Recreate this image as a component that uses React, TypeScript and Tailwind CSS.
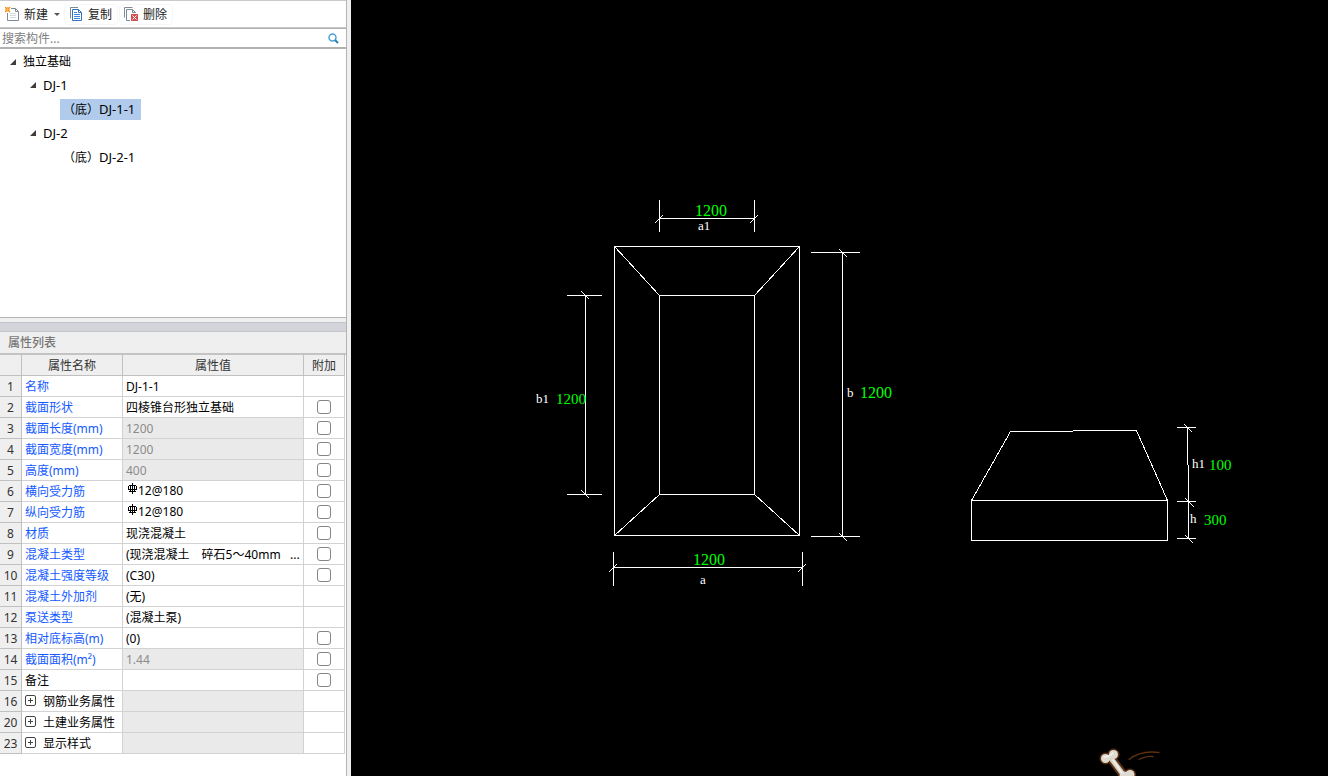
import { useState } from "react";

type Row = {
  no: number;
  name: string;
  value?: string;
  kind?: "plain" | "readonly" | "rebar" | "group";
  check?: boolean;
  black?: boolean;
};

const rows: Row[] = [
  { no: 1, name: "名称", value: "DJ-1-1" },
  { no: 2, name: "截面形状", value: "四棱锥台形独立基础", check: true },
  { no: 3, name: "截面长度(mm)", value: "1200", kind: "readonly", check: true },
  { no: 4, name: "截面宽度(mm)", value: "1200", kind: "readonly", check: true },
  { no: 5, name: "高度(mm)", value: "400", kind: "readonly", check: true },
  { no: 6, name: "横向受力筋", value: "12@180", kind: "rebar", check: true },
  { no: 7, name: "纵向受力筋", value: "12@180", kind: "rebar", check: true },
  { no: 8, name: "材质", value: "现浇混凝土", check: true },
  { no: 9, name: "混凝土类型", value: "(现浇混凝土　碎石5～40mm   ...", check: true },
  { no: 10, name: "混凝土强度等级", value: "(C30)", check: true },
  { no: 11, name: "混凝土外加剂", value: "(无)" },
  { no: 12, name: "泵送类型", value: "(混凝土泵)" },
  { no: 13, name: "相对底标高(m)", value: "(0)", check: true },
  { no: 14, name: "截面面积(m²)", value: "1.44", kind: "readonly", check: true },
  { no: 15, name: "备注", check: true, black: true },
  { no: 16, name: "钢筋业务属性", kind: "group" },
  { no: 20, name: "土建业务属性", kind: "group" },
  { no: 23, name: "显示样式", kind: "group" },
];

const NewIcon = () => (
  <svg width="15" height="16" viewBox="0 0 15 16" fill="none">
    <path d="M6 1.500H10.500L13.500 4.500V13.500H2.500V6" stroke="#7d8b99" />
    <path d="M10.500 1.500V4.500H13.500" stroke="#7d8b99" />
    <path d="M5 6.500H11M5 8.500H11M5 10.500H11" stroke="#d3dae0" />
    <path d="M0 0L5 5M5 0L0 5" stroke="#f08c14" strokeWidth="1.500" />
    <path d="M2.500 0V5M0 2.500H5" stroke="#fbb955" />
  </svg>
);

const CopyIcon = () => (
  <svg width="13" height="15" viewBox="0 0 13 15" fill="none">
    <path d="M0.500 11.500V0.500H8" stroke="#7d8b99" />
    <path d="M2.500 2.500H8.500L11.500 5.500V13.500H2.500Z" fill="#fff" stroke="#2f74c4" />
    <path d="M8.500 2.500V5.500H11.500" stroke="#2f74c4" />
    <path d="M4 5.500H7M4 7.500H10M4 9.500H10M4 11.500H10" stroke="#3f86d6" />
  </svg>
);

const DeleteIcon = () => (
  <svg width="15" height="15" viewBox="0 0 15 15" fill="none">
    <path d="M0.500 10.500V0.500H8.500" stroke="#7d8b99" />
    <path d="M6 13.500H2.500V2.500H8.500L11.500 5.500V6" stroke="#7d8b99" />
    <path d="M8.500 2.500V5.500H11.500" stroke="#7d8b99" />
    <rect x="7" y="7" width="7" height="7" fill="#d64f50" />
    <path d="M8.500 8.500L12.500 12.500M12.500 8.500L8.500 12.500" stroke="#fff" />
  </svg>
);

const SearchIcon = () => (
  <svg width="11" height="11" viewBox="0 0 11 11" fill="none">
    <circle cx="4.500" cy="4.500" r="3.500" stroke="#4ba3d3" strokeWidth="1.500" />
    <path d="M7 7L10 10" stroke="#2d7fb0" strokeWidth="2" />
  </svg>
);

const RebarIcon = () => (
  <svg width="9" height="12" viewBox="0 0 9 12" fill="none" stroke="#000" shapeRendering="crispEdges">
    <path d="M1 3.500H8M0 7.500H9M1 9.500H8M4.500 1V12M2.500 3V9M6.500 3V9M0.500 4V7M8.500 4V7" />
  </svg>
);

const Expander = ({ label, onClick }: { label: string; onClick: () => void }) => (
  <button type="button" aria-label={label} onClick={onClick} className="w-3 h-6 flex items-center">
    <svg width="6" height="6" viewBox="0 0 6 6">
      <path d="M6 0V6H0Z" fill="#3c3c3c" />
    </svg>
  </button>
);

const TreePanel = () => {
  const [selected, setSelected] = useState("DJ-1-1");
  const [closed, setClosed] = useState<string[]>([]);
  const toggle = (id: string) =>
    setClosed((c) => (c.includes(id) ? c.filter((x) => x !== id) : [...c, id]));

  return (
    <ul className="h-[269px] border-b border-[#b4b4b4] bg-white text-black">
      <li>
        <div className="flex items-center h-6 pl-[10px] pt-[2px] gap-px">
          <Expander label="独立基础" onClick={() => toggle("root")} />
          <span>独立基础</span>
        </div>
        {!closed.includes("root") && (
          <ul>
            {["DJ-1", "DJ-2"].map((id) => (
              <li key={id}>
                <div className="flex items-center h-6 pl-[30px] gap-px">
                  <Expander label={id} onClick={() => toggle(id)} />
                  <span className="text-[13px]">{id}</span>
                </div>
                {!closed.includes(id) && (
                  <div className="flex items-center h-6 pl-[60px]">
                    <button
                      type="button"
                      onClick={() => setSelected(`${id}-1`)}
                      className={`h-[21px] w-[81px] pl-[3px] pt-px flex items-baseline whitespace-nowrap ${selected === `${id}-1` ? "bg-[#b0cbec]" : ""}`}
                    >
                      （底）<span className="text-[13px]">{id}-1</span>
                    </button>
                  </div>
                )}
              </li>
            ))}
          </ul>
        )}
      </li>
    </ul>
  );
};

const PropertyTable = () => (
  <table className="w-[345px] table-fixed border-separate border-spacing-0 text-left">
    <colgroup>
      <col className="w-[22px]" />
      <col className="w-[101px]" />
      <col className="w-[181px]" />
      <col className="w-[41px]" />
    </colgroup>
    <thead>
      <tr className="h-[21px] bg-[#efefef] text-[#333]">
        <td className="border-r border-b border-[#c0c0c0]" />
        <th scope="col" className="border-r border-b border-[#c0c0c0] pt-[2px] font-normal text-center">属性名称</th>
        <th scope="col" className="border-r border-b border-[#c0c0c0] pt-[2px] font-normal text-center">属性值</th>
        <th scope="col" className="border-r border-b border-[#c0c0c0] pt-[2px] font-normal text-center">附加</th>
      </tr>
    </thead>
    <tbody>
      {rows.map((row) => (
        <tr key={row.no} className="h-[21px]">
          <td className="border-r border-b border-[#c0c0c0] bg-[#efefef] pt-[2px] text-center text-[#333]">{row.no}</td>
          <th
            scope="row"
            className={`border-r border-b border-[#d2d2d2] pt-[2px] pl-[3px] font-normal whitespace-nowrap ${row.kind === "group" || row.black ? "text-black" : "text-[#145aff]"}`}
          >
            {row.kind === "group" ? (
              <span className="flex items-start gap-[7px]">
                <button type="button" aria-label={`展开${row.name}`} className="w-[11px] h-[11px] mt-[2px]">
                  <svg width="11" height="11" viewBox="0 0 11 11" fill="none" stroke="#444">
                    <rect x="0.500" y="0.500" width="10" height="10" rx="1.500" />
                    <path d="M3 5.500H8M5.500 3V8" />
                  </svg>
                </button>
                {row.name}
              </span>
            ) : (
              row.name
            )}
          </th>
          <td
            className={`border-r border-b border-[#d2d2d2] pl-[3px] whitespace-pre overflow-hidden ${row.kind === "rebar" ? "" : "pt-[2px]"} ${row.kind === "readonly" || row.kind === "group" ? "bg-[#eaeaea] text-[#8c8c8c]" : "text-black"}`}
          >
            {row.kind === "rebar" ? (
              <span className="flex items-start gap-px pl-[2px]">
                <RebarIcon />
                {row.value}
              </span>
            ) : (
              row.value
            )}
          </td>
          <td className="border-r border-b border-[#d2d2d2]">
            {row.check && (
              <input
                type="checkbox"
                aria-label={`${row.name} 附加`}
                className="block mx-auto w-[14px] h-[14px] appearance-none rounded-[3px] border border-[#858585] bg-white checked:bg-[#145aff]"
              />
            )}
          </td>
        </tr>
      ))}
    </tbody>
  </table>
);

const Drawing = () => (
  <svg viewBox="0 0 977 776" className="w-full h-full" role="img" aria-label="四棱锥台形独立基础">
    <g transform="translate(0.5 0.5)" fill="none" stroke="#fff" strokeLinecap="square" shapeRendering="crispEdges">
      {/* plan view */}
      <path d="M263 246H448V535H263ZM308 295H403V494H308Z" />
      <path d="M263 246L308 295M448 246L403 295M263 535L308 494M448 535L403 494" />
      {/* a1 */}
      <path d="M308 200V231M403 200V231M308 218H403M304 222L311 215M399 222L406 215" />
      {/* b1 */}
      <path d="M216 295H250M216 494H250M234 295V494M230 291L237 298M230 490L237 497" />
      {/* b */}
      <path d="M460 252H508M460 536H508M491 252V536M488 249L495 256M488 533L495 540" />
      {/* a */}
      <path d="M262 552V585M451 552V585M262 567H451M258 571L265 564M447 571L454 564" />
      {/* elevation */}
      <path d="M620 500H816V540H620ZM620 500L659 431H721M722 430H785L816 500" />
      {/* h1, h */}
      <path d="M826 427H844M826 501H844M826 538H844M836 427V464M837 465V538" />
      <path d="M833 424L840 431M834 498L842 506M834 535L841 542" />
    </g>
    <g fill="#0f0" className="font-['Liberation_Serif',serif] text-[16px]">
      <text x="344" y="216">1200</text>
      <text x="342" y="565">1200</text>
      <text x="509" y="398">1200</text>
    </g>
    <g fill="#0f0" className="font-['Liberation_Serif',serif] text-[15px]">
      <text x="205" y="404">1200</text>
      <text x="858" y="470">100</text>
      <text x="853" y="525">300</text>
    </g>
    <g fill="#fff" className="font-['Liberation_Serif',serif] text-[13px]">
      <text x="347" y="230">a1</text>
      <text x="349" y="584">a</text>
      <text x="185" y="403">b1</text>
      <text x="496" y="397">b</text>
      <text x="841" y="468">h1</text>
      <text x="839" y="523">h</text>
    </g>
    {/* bone */}
    <g strokeLinecap="round" fill="none">
      <g stroke="#5c3010" fill="#5c3010">
        <path d="M759 757L777 781" strokeWidth="9" />
        <circle cx="754.500" cy="758.500" r="5.500" />
        <circle cx="762.500" cy="754.500" r="5.500" />
        <circle cx="773" cy="776" r="5.500" />
        <circle cx="779" cy="774.500" r="5.500" />
      </g>
      <path d="M759 757L777 781" stroke="#d8d2c8" strokeWidth="5" />
      <g fill="#dedad2">
        <circle cx="754.500" cy="758.500" r="4.500" />
        <circle cx="762.500" cy="754.500" r="4.500" />
        <circle cx="773" cy="776" r="4.500" />
        <circle cx="779" cy="774.500" r="4.500" />
      </g>
      <path d="M753 757Q758 757 762 753M762 760L771 773" stroke="#f4f2ee" strokeWidth="1.500" />
      <path d="M778 759.500Q790 750 808 752.500M788 759.500Q796 755.500 802 756.500" stroke="#5c3010" strokeWidth="1.300" />
    </g>
  </svg>
);

const App = () => {
  return (
    <div className="flex h-screen overflow-hidden bg-[#efefef] font-['Noto_Sans','Noto_Sans_CJK_SC',sans-serif] text-[12px] leading-[18px]">
      <aside className="w-[347px] shrink-0 mr-1 flex flex-col border-r border-[#b4b4b4]">
        <div className="h-7 flex items-center border-y border-[#c8cacd] bg-white pt-px pl-[5px] text-[#222]">
          <button type="button" className="flex items-center gap-1 h-[21px]">
            <NewIcon />
            新建
            <svg width="6" height="3" viewBox="0 0 6 3" className="ml-[2px]">
              <path d="M0 0H6L3 3Z" fill="#555" />
            </svg>
          </button>
          <button type="button" className="flex items-center gap-[5px] h-[21px] w-[54px] pl-[5px] ml-1 rounded-sm border border-[#f7f7f7] whitespace-nowrap">
            <CopyIcon />
            复制
          </button>
          <button type="button" className="flex items-center gap-1 h-[21px] w-[54px] pl-1 ml-px rounded-sm border border-[#f7f7f7] whitespace-nowrap">
            <DeleteIcon />
            删除
          </button>
        </div>
        <div className="h-[21px] flex items-center border-t border-b-2 border-[#b0b0b0] bg-white pl-[2px] pr-[7px]">
          <input
            type="text"
            aria-label="搜索构件"
            placeholder="搜索构件..."
            className="flex-1 min-w-0 h-[18px] pt-[2px] outline-none placeholder:text-[#808080]"
          />
          <button type="button" aria-label="搜索">
            <SearchIcon />
          </button>
        </div>
        <TreePanel />
        <div className="h-[10px] mt-1 shrink-0 border-y border-[#c3c5ca] bg-[#d2d4da]" />
        <h2 className="h-[23px] shrink-0 border-b-2 border-[#c3c3c3] pl-2 leading-[22px] font-medium text-[#777]">属性列表</h2>
        <div className="flex-1 min-h-0 overflow-hidden bg-white">
          <PropertyTable />
        </div>
      </aside>
      <main className="flex-1 min-w-0 bg-black">
        <Drawing />
      </main>
    </div>
  );
};

export default App;
